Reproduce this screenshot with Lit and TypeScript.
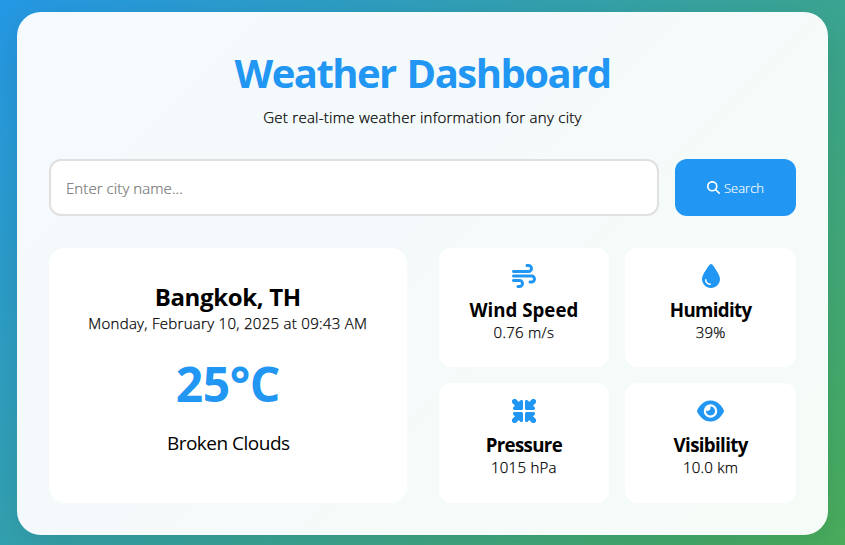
import { LitElement, html, css, svg } from "lit";
import { customElement } from "lit/decorators.js";

const minimizeArm =
  "M456 224H312c-13.3 0-24-10.7-24-24V56c0-9.7 5.8-18.5 14.8-22.2s19.3-1.7 26.2 5.2l40 40L442.3 5.7C446 2 450.9 0 456 0s10 2 13.7 5.7l36.7 36.7C510 46 512 50.9 512 56s-2 10-5.7 13.7L433 143l40 40c6.9 6.9 8.9 17.2 5.2 26.2s-12.5 14.8-22.2 14.8z";

const icons = {
  search: {
    width: 512,
    body: svg`<path d="M416 208c0 45.9-14.9 88.3-40 122.7L502.6 457.4c12.5 12.5 12.5 32.8 0 45.3s-32.8 12.5-45.3 0L330.7 376c-34.4 25.2-76.8 40-122.7 40C93.1 416 0 322.9 0 208S93.1 0 208 0S416 93.1 416 208zM208 352a144 144 0 1 0 0-288 144 144 0 1 0 0 288z"/>`,
  },
  wind: {
    width: 512,
    body: svg`<path d="M288 32c0 17.7 14.3 32 32 32h32c17.7 0 32 14.3 32 32s-14.3 32-32 32H32c-17.7 0-32 14.3-32 32s14.3 32 32 32H352c53 0 96-43 96-96s-43-96-96-96H320c-17.7 0-32 14.3-32 32zm64 352c0 17.7 14.3 32 32 32h32c53 0 96-43 96-96s-43-96-96-96H32c-17.7 0-32 14.3-32 32s14.3 32 32 32H416c17.7 0 32 14.3 32 32s-14.3 32-32 32H384c-17.7 0-32 14.3-32 32zM128 512h32c53 0 96-43 96-96s-43-96-96-96H32c-17.7 0-32 14.3-32 32s14.3 32 32 32H160c17.7 0 32 14.3 32 32s-14.3 32-32 32H128c-17.7 0-32 14.3-32 32s14.3 32 32 32z"/>`,
  },
  droplet: {
    width: 384,
    body: svg`<path d="M192 512C86 512 0 426 0 320C0 228.8 130.2 57.7 166.6 11.7C172.6 4.2 181.5 0 191.1 0h1.8c9.6 0 18.5 4.2 24.5 11.7C253.8 57.7 384 228.8 384 320c0 106-86 192-192 192zM96 336c0-8.8-7.2-16-16-16s-16 7.2-16 16c0 61.9 50.1 112 112 112c8.8 0 16-7.2 16-16s-7.2-16-16-16c-44.2 0-80-35.8-80-80z"/>`,
  },
  minimize: {
    width: 512,
    body: svg`<g stroke="currentColor" stroke-width="22" stroke-linejoin="round"><path d=${minimizeArm} /><path d=${minimizeArm} transform="rotate(90 256 256)" /><path d=${minimizeArm} transform="rotate(180 256 256)" /><path d=${minimizeArm} transform="rotate(270 256 256)" /></g>`,
  },
  eye: {
    width: 576,
    body: svg`<path d="M288 32c-80.8 0-145.5 36.8-192.6 80.6C48.6 156 17.3 208 2.5 243.7c-3.3 7.9-3.3 16.7 0 24.6C17.3 304 48.6 356 95.4 399.4C142.5 443.2 207.2 480 288 480s145.5-36.8 192.6-80.6c46.8-43.5 78.1-95.4 93-131.1c3.3-7.9 3.3-16.7 0-24.6c-14.9-35.7-46.2-87.7-93-131.1C433.5 68.8 368.8 32 288 32zM144 256a144 144 0 1 1 288 0 144 144 0 1 1 -288 0zm144-64c0 35.3-28.7 64-64 64c-7.1 0-13.9-1.2-20.3-3.3c-5.5-1.8-11.9 1.6-11.7 7.4c.3 6.9 1.3 13.8 3.2 20.7c13.7 51.2 66.4 81.6 117.6 67.9s81.6-66.4 67.9-117.6c-11.1-41.5-47.8-69.4-88.6-71.1c-5.8-.2-9.2 6.1-7.4 11.7c2.1 6.4 3.3 13.2 3.3 20.3z"/>`,
  },
};

type IconName = keyof typeof icons;

const details: { icon: IconName; label: string; value: string }[] = [
  { icon: "wind", label: "Wind Speed", value: "0.76 m/s" },
  { icon: "droplet", label: "Humidity", value: "39%" },
  { icon: "minimize", label: "Pressure", value: "1015 hPa" },
  { icon: "eye", label: "Visibility", value: "10.0 km" },
];

@customElement("app-root")
export class AppRoot extends LitElement {
  static styles = css`
    :host {
      display: block;
      box-sizing: border-box;
      height: 545px;
      padding: 12px 17px 10px;
      overflow: hidden;
      background: linear-gradient(135deg, #2196f3 -10%, #4caf50 108%);
      font-family: "Open Sans", "Noto Sans", sans-serif;
      font-size: 15px;
      font-weight: 300;
      color: #000;
    }
    * {
      box-sizing: border-box;
      margin: 0;
    }
    .panel {
      height: 523px;
      padding: 32px;
      border-radius: 24px;
      background: rgba(255, 255, 255, 0.95);
      box-shadow: 0 8px 32px rgba(0, 0, 0, 0.1);
    }
    header {
      height: 115px;
      text-align: center;
      white-space: nowrap;
    }
    h1 {
      font-size: 40px;
      line-height: 58px;
      font-weight: 700;
      letter-spacing: -1.53px;
      word-spacing: 2px;
      color: #2196f3;
    }
    .tagline {
      padding-top: 3px;
      line-height: 24px;
      letter-spacing: 0.26px;
    }
    .tagline,
    .date,
    .value {
      -webkit-text-stroke: 0.25px #000;
    }
    .search {
      display: flex;
      gap: 16px;
      height: 57px;
      margin-bottom: 32px;
    }
    .field {
      flex: 1;
      min-width: 0;
      padding: 0 15px;
      border: 2px solid #e0e0e0;
      border-radius: 12px;
      background: #fff;
      font: inherit;
      letter-spacing: 0.08px;
      outline: none;
    }
    .field::placeholder {
      color: #757575;
      opacity: 1;
      -webkit-text-stroke: 0.2px #757575;
    }
    .submit {
      display: flex;
      align-items: center;
      justify-content: center;
      gap: 4px;
      width: 121px;
      padding: 0;
      border: 0;
      border-radius: 12px;
      background: #2196f3;
      color: #fff;
      font: inherit;
      font-size: 13px;
      -webkit-text-stroke: 0.15px #fff;
    }
    .icon {
      display: block;
      height: 24px;
      fill: currentColor;
    }
    .submit .icon {
      height: 13px;
    }
    .weather {
      display: grid;
      grid-template-columns: 1fr 1fr;
      gap: 32px;
      height: 255px;
    }
    .current,
    .detail {
      border-radius: 16px;
      background: #fff;
      text-align: center;
      white-space: nowrap;
    }
    .detail {
      border-radius: 12px;
    }
    .current {
      padding-top: 34px;
    }
    h2 {
      font-size: 24px;
      line-height: 30px;
      font-weight: 700;
      letter-spacing: -0.35px;
    }
    .date {
      line-height: 23px;
      letter-spacing: 0.29px;
    }
    .temperature {
      padding: 17px 0 14px;
      font-size: 48px;
      line-height: 64px;
      font-weight: 700;
      letter-spacing: -0.5px;
      color: #2196f3;
    }
    .conditions {
      padding-left: 1px;
      font-size: 19px;
      line-height: 26px;
      font-weight: 400;
      letter-spacing: -0.5px;
    }
    .details {
      display: grid;
      grid-template-columns: 1fr 1fr;
      grid-template-rows: 119px 120px;
      gap: 16px;
    }
    .detail {
      display: flex;
      flex-direction: column;
      align-items: center;
      padding-top: 16px;
    }
    .detail .icon {
      color: #2196f3;
    }
    h3 {
      padding-top: 9px;
      font-size: 18.7px;
      line-height: 25px;
      font-weight: 700;
      letter-spacing: -0.65px;
    }
    .detail.wind h3 {
      letter-spacing: 0;
    }
    .value {
      line-height: 20px;
      letter-spacing: 0.25px;
    }
  `;

  private icon(name: IconName) {
    const { width, body } = icons[name];
    return html`<svg class="icon" viewBox="0 0 ${width} 512" aria-hidden="true">${body}</svg>`;
  }

  render() {
    return html`
      <main class="panel">
        <header>
          <h1>Weather Dashboard</h1>
          <p class="tagline">Get real-time weather information for any city</p>
        </header>
        <div class="search">
          <input class="field" type="text" placeholder="Enter city name..." />
          <button class="submit">${this.icon("search")}<span>Search</span></button>
        </div>
        <div class="weather">
          <section class="current">
            <h2>Bangkok, TH</h2>
            <p class="date">Monday, February 10, 2025 at 09:43 AM</p>
            <div class="temperature">25°C</div>
            <p class="conditions">Broken Clouds</p>
          </section>
          <section class="details">
            ${details.map(
              (d) => html`<article class="detail ${d.icon}">
                ${this.icon(d.icon)}
                <h3>${d.label}</h3>
                <p class="value">${d.value}</p>
              </article>`
            )}
          </section>
        </div>
      </main>
    `;
  }
}
